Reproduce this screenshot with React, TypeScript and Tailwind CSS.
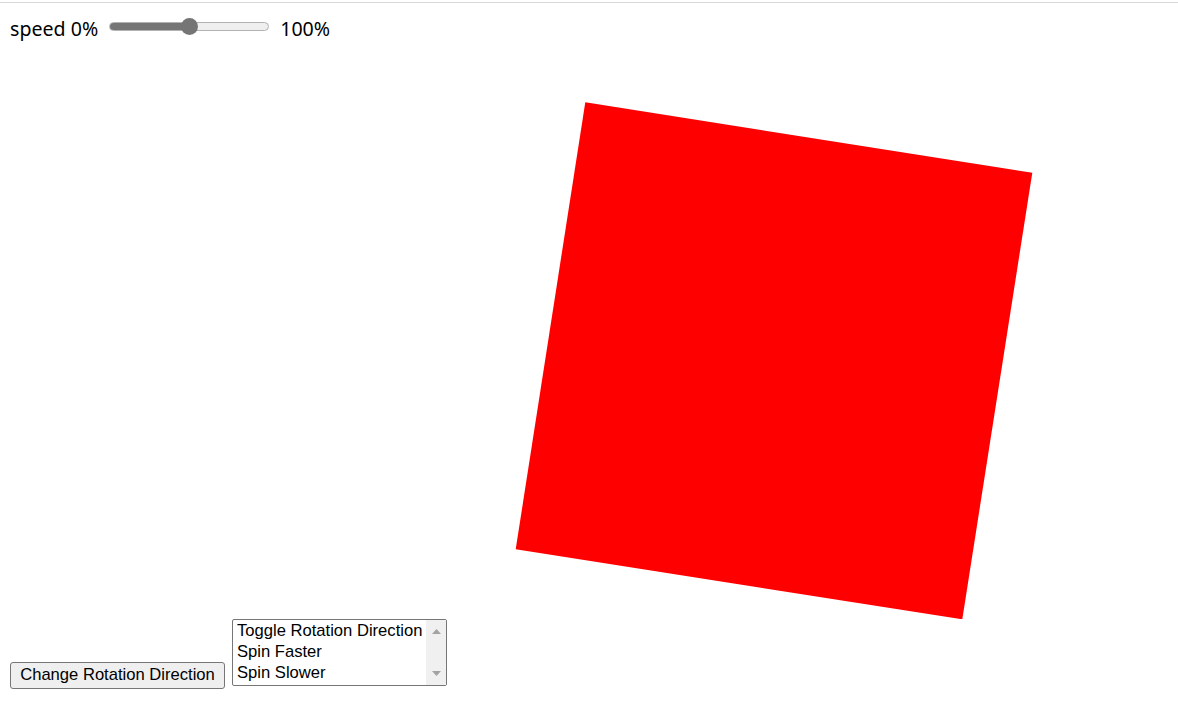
import React from 'react';

const options = ['Toggle Rotation Direction', 'Spin Faster', 'Spin Slower'];

function SpeedSlider({ value }: { value: number }) {
    // track 160px, thumb 17px
    const pct = value / 100;
    return (
        <div className="relative w-[160px] h-[18px] flex items-center">
            <div className="w-full h-[9px] rounded-full bg-[#efefef] border border-[#b2b2b2] overflow-hidden">
                <div className="h-full bg-[#757575]" style={{ width: `${pct * 100}%` }} />
            </div>
            <div
                className="absolute top-[1px] w-[17px] h-[17px] rounded-full bg-[#757575]"
                style={{ left: `${pct * (160 - 17)}px` }}
            />
        </div>
    );
}

export default function App() {
    return (
        <div className="w-[1178px] h-[725px] bg-white overflow-hidden">
            <div className="h-[2px]" />
            <div className="h-px bg-[#d9d9d9]" />

            {/* speed control */}
            <div className="h-[52px] flex items-center pl-[10px] text-[19.6px] text-black font-['Noto_Sans','Noto_Sans_CJK_KR',sans-serif]">
                <span>speed 0%</span>
                <div className="ml-[11px] mr-[11px] mb-[6px]">
                    <SpeedSlider value={50} />
                </div>
                <span>100%</span>
            </div>

            {/* canvas */}
            <svg width="1178" height="564" className="block">
                <polygon points="585.3,47.3 1032.3,117.7 962.3,564.3 515.7,494.3" fill="#ff0000" />
            </svg>

            {/* controls */}
            <div className="flex items-end gap-[7px] pl-[10px] font-['Liberation_Sans',Arial,sans-serif] text-[16.6px] text-black">
                <button className="w-[215px] h-[27px] bg-[#efefef] border border-[#767676] rounded-[3px] leading-none">
                    Change Rotation Direction
                </button>
                <div className="mb-[3px] w-[215px] h-[67px] border border-[#767676] rounded-[2px] flex bg-white">
                    <div className="flex-1 pl-[4px] overflow-hidden">
                        {options.map((o) => (
                            <div key={o} className="h-[21px] leading-[21px] whitespace-nowrap">{o}</div>
                        ))}
                    </div>
                    <div className="w-[20px] bg-[#f0f0f0] flex flex-col items-center justify-between py-[9px]">
                        <svg width="9" height="5" viewBox="0 0 9 5"><polygon points="4.5,0 9,5 0,5" fill="#a3a3a3" /></svg>
                        <svg width="9" height="5" viewBox="0 0 9 5"><polygon points="0,0 9,0 4.5,5" fill="#a3a3a3" /></svg>
                    </div>
                </div>
            </div>
        </div>
    );
}
